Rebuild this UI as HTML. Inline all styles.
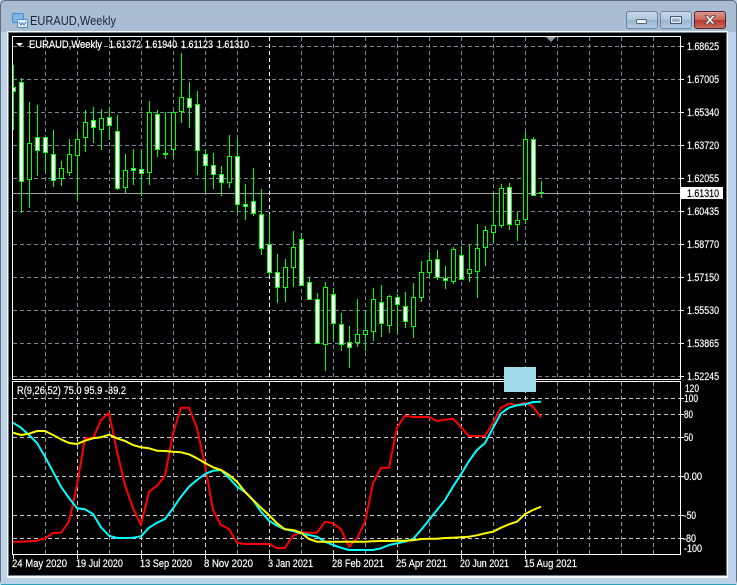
<!DOCTYPE html>
<html><head><meta charset="utf-8"><title>EURAUD,Weekly</title>
<style>
html,body{margin:0;padding:0;width:737px;height:585px;overflow:hidden;background:#bcd2e8}
svg{display:block;position:absolute;left:0;top:0}
text{font-family:"Liberation Sans",sans-serif;font-size:11px;fill:#fff;stroke:#fff;stroke-width:.2px}
</style></head><body>
<svg width="737" height="585" viewBox="0 0 737 585" xmlns="http://www.w3.org/2000/svg">
<defs>
<linearGradient id="tb" x1="0" y1="0" x2="0" y2="1"><stop offset="0" stop-color="#a8bdd1"/><stop offset="1" stop-color="#bed4ea"/></linearGradient>
<linearGradient id="bn" x1="0" y1="0" x2="0" y2="1"><stop offset="0" stop-color="#c6d7e8"/><stop offset=".48" stop-color="#b2c8de"/><stop offset=".52" stop-color="#98b3cf"/><stop offset="1" stop-color="#b6cfe8"/></linearGradient>
<linearGradient id="cl" x1="0" y1="0" x2="0" y2="1"><stop offset="0" stop-color="#dc9a90"/><stop offset=".48" stop-color="#cc6a5c"/><stop offset=".52" stop-color="#b8372a"/><stop offset="1" stop-color="#c8705e"/></linearGradient>
<clipPath id="cp"><rect x="13" y="37" width="667" height="342"/></clipPath>
</defs>
<!-- window frame -->
<rect x="0" y="0" width="737" height="585" rx="5" fill="#5f6f7c"/>
<rect x="1" y="1" width="735" height="583" rx="4" fill="url(#tb)"/>
<rect x="1" y="32" width="735" height="552" fill="#bcd2e8"/>
<rect x="1" y="584" width="735" height="1" fill="#2f9fb4"/>
<rect x="7" y="31" width="721" height="547" fill="#f4f7fb"/>
<rect x="8" y="32" width="719" height="544" fill="#6f7f8c"/>
<rect x="9" y="33" width="717" height="542" fill="#000"/>
<!-- title -->
<rect x="12.500" y="13.500" width="11" height="9" rx="1" fill="#7fb6ea" stroke="#4a8ac8"/>
<rect x="17.500" y="19.500" width="10" height="8" rx="1" fill="#e8f3fc" stroke="#4a8ac8"/>
<path d="M19 22l2 3 1.500-2 1.500 2 2-3" fill="none" stroke="#3a78b8"/>
<text x="30" y="25" style="font-size:12.500px;fill:#16283a;stroke:none" textLength="86" lengthAdjust="spacingAndGlyphs">EURAUD,Weekly</text>
<!-- buttons -->
<rect x="626.500" y="11.500" width="31" height="17" rx="2.500" fill="url(#bn)" stroke="#6b84a0"/>
<rect x="660.500" y="11.500" width="31" height="17" rx="2.500" fill="url(#bn)" stroke="#6b84a0"/>
<rect x="694.500" y="11.500" width="31" height="17" rx="2.500" fill="url(#cl)" stroke="#5a2236"/>
<rect x="636.500" y="19.500" width="10" height="4" rx="1" fill="#eef2f6" stroke="#55667a"/>
<rect x="670.500" y="16.500" width="11" height="7" fill="none" stroke="#46586c" stroke-width="1"/>
<rect x="671.500" y="17.500" width="9" height="5" fill="none" stroke="#eef2f6" stroke-width="1"/>
<rect x="673.500" y="19" width="4" height="2" fill="#8ea6be"/>
<path d="M705 15.500h3l2 2.500 2-2.500h3.500l-3.800 4.500 3.800 4h-3.500l-2-2.300-2 2.300h-3.500l3.800-4z" fill="#f0f0f0" stroke="#5c4048" stroke-width=".8"/>

<!-- upper grid -->
<g shape-rendering="crispEdges" fill="none">
<path stroke="#778899" stroke-dasharray="4 3" d="M13 46.500H680M13 79.500H680M13 112.500H680M13 145.500H680M13 178.500H680M13 211.500H680M13 244.500H680M13 277.500H680M13 310.500H680M13 343.500H680M13 376.500H680"/>
<path stroke="#778899" stroke-dasharray="4 3" d="M45.500 37V379M77.500 37V379M109.500 37V379M141.500 37V379M173.500 37V379M205.500 37V379M237.500 37V379M301.500 37V379M333.500 37V379M365.500 37V379M397.500 37V379M429.500 37V379M461.500 37V379M493.500 37V379M525.500 37V379M557.500 37V379M589.500 37V379M621.500 37V379M653.500 37V379"/>
<path stroke="#fff" stroke-dasharray="4 3" d="M269.500 37V379"/>
<!-- lower grid -->
<path stroke="#c4c8cc" stroke-dasharray="4 3" d="M13 398.500H680M13 414.500H680M13 437.500H680M13 476.500H680M13 515.500H680M13 538.500H680"/>
<path stroke="#8a98a8" stroke-dasharray="4 3" d="M45.500 382V554M109.500 382V554M173.500 382V554M237.500 382V554M301.500 382V554M365.500 382V554M429.500 382V554M493.500 382V554M557.500 382V554M589.500 382V554M621.500 382V554M653.500 382V554"/>
<path stroke="#d4d8dc" stroke-dasharray="4 3" d="M77.500 382V554M141.500 382V554M205.500 382V554M269.500 382V554M333.500 382V554M397.500 382V554M461.500 382V554M525.500 382V554"/>
<!-- price line -->
<path stroke="#a0a0a0" d="M13 193.500H680"/>
</g>

<!-- candles -->
<g clip-path="url(#cp)" shape-rendering="crispEdges">
<path fill="none" stroke="#00ff00" d="M13.500 65V130M21.500 78V213M29.500 102V208M37.500 105V176M45.500 137V172M53.500 130V187M61.500 161V186M69.500 139V176M77.500 132V200M85.500 110V152M93.500 107V143M101.500 109V150M109.500 107V140M117.500 115V190M125.500 154V193M133.500 149V185M141.500 150V196M149.500 101V185M157.500 110V157M165.500 112V159M173.500 111V158M181.500 53V123M189.500 82V128M197.500 91V175M205.500 149V193M213.500 153V189M221.500 166V196M229.500 135V188M237.500 138V213M245.500 184V220M253.500 168V216M261.500 189V255M269.500 214V276M277.500 254V303M285.500 259V302M293.500 231V287M301.500 233V285M309.500 277V299M317.500 293V344M325.500 282V371M333.500 288V340M341.500 313V351M349.500 326V368M357.500 299V347M365.500 310V351M373.500 288V341M381.500 285V337M389.500 295V333M397.500 294V333M405.500 292V328M413.500 283V338M421.500 261V302M429.500 252V278M437.500 250V280M445.500 266V289M453.500 247V284M461.500 246V280M469.500 244V282M477.500 224V298M485.500 226V266M493.500 194V243M501.500 184V228M509.500 183V230M517.500 212V241M525.500 132V224M533.500 137V195M541.500 181V198"/>
<!-- up candles (black body) -->
<path fill="#000" stroke="#00ff00" d="M27.500 143.500h4v36h-4zM59.500 168.500h4v10h-4zM67.500 154.500h4v18h-4zM75.500 139.500h4v16h-4zM83.500 122.500h4v15h-4zM99.500 118.500h4v11h-4zM123.500 170.500h4v17h-4zM147.500 112.500h4v60h-4zM171.500 112.500h4v37h-4zM179.500 97.500h4v14h-4zM227.500 156.500h4v26h-4zM283.500 267.500h4v20h-4zM291.500 247.500h4v20h-4zM323.500 287.500h4v57h-4zM355.500 334.500h4v8h-4zM363.500 330.500h4v4h-4zM371.500 299.500h4v32h-4zM387.500 296.500h4v29h-4zM411.500 297.500h4v29h-4zM419.500 272.500h4v25h-4zM427.500 260.500h4v12h-4zM451.500 249.500h4v32h-4zM467.500 269.500h4v4h-4zM475.500 248.500h4v23h-4zM483.500 230.500h4v17h-4zM491.500 225.500h4v7h-4zM499.500 188.500h4v37h-4zM515.500 220.500h4v4h-4zM523.500 139.500h4v80h-4z"/>
<!-- down candles (white body) -->
<path fill="#fff" stroke="#00ff00" d="M11.500 87.500h4v4h-4zM19.500 82.500h4v99h-4zM35.500 137.500h4v13h-4zM43.500 137.500h4v15h-4zM51.500 154.500h4v26h-4zM91.500 120.500h4v7h-4zM107.500 117.500h4v8h-4zM115.500 131.500h4v57h-4zM131.500 168.500h4v2h-4zM139.500 169.500h4v4h-4zM155.500 114.500h4v35h-4zM163.500 153.500h4v1h-4zM187.500 98.500h4v9h-4zM195.500 104.500h4v46h-4zM203.500 154.500h4v11h-4zM211.500 165.500h4v9h-4zM219.500 174.500h4v8h-4zM235.500 156.500h4v48h-4zM243.500 204.500h4v2h-4zM251.500 201.500h4v12h-4zM259.500 214.500h4v34h-4zM267.500 244.500h4v28h-4zM275.500 272.500h4v15h-4zM299.500 239.500h4v46h-4zM307.500 282.500h4v17h-4zM315.500 299.500h4v44h-4zM331.500 294.500h4v29h-4zM339.500 324.500h4v20h-4zM347.500 342.500h4v5h-4zM379.500 302.500h4v21h-4zM395.500 297.500h4v7h-4zM403.500 306.500h4v15h-4zM435.500 259.500h4v18h-4zM443.500 278.500h4v2h-4zM459.500 255.500h4v24h-4zM507.500 187.500h4v37h-4zM531.500 139.500h4v56h-4z"/>
<path stroke="#00ff00" d="M539 192.500h5"/>
</g>

<!-- chart frames -->
<g fill="none" stroke="#fff" shape-rendering="crispEdges">
<rect x="12.500" y="36.500" width="668" height="343"/>
<rect x="12.500" y="381.500" width="668" height="173"/>
<path d="M681 46.500h3M681 79.500h3M681 112.500h3M681 145.500h3M681 178.500h3M681 211.500h3M681 244.500h3M681 277.500h3M681 310.500h3M681 343.500h3M681 376.500h3M681 398.500h3M681 414.500h3M681 437.500h3M681 476.500h3M681 515.500h3M681 538.500h3"/>
<path d="M13.500 555v4M77.500 555v4M141.500 555v4M205.500 555v4M269.500 555v4M333.500 555v4M397.500 555v4M461.500 555v4M525.500 555v4"/>
</g>

<!-- indicator lines -->
<g fill="none" stroke-width="2" stroke-linejoin="round">
<polyline stroke="#ff0000" points="13,541.700 21,541.700 29,541.300 37,540.700 45,538.300 53,533 61,532.700 69,521.700 77,485 85,438.300 93,438.300 101,420 109,412.700 117,451.700 125,485 133,508.300 141,525 149,491.700 157,485.700 165,475.700 173,433.300 181,407.700 189,407.700 197,428.300 205,465 213,510 221,525 229,529 237,542.700 245,544 253,544 261,544 269,544 277,548 285,548 293,535.700 301,532.300 309,532.700 317,532.700 325,521.700 333,523.300 341,529.300 349,546.700 357,538.300 365,521.700 373,483.300 381,467.700 389,467.700 397,427.700 405,415.700 413,417 421,417 429,417 437,421 445,419.700 453,418.700 461,427.300 469,436 477,436 485,436 493,423 501,407.700 509,403.700 517,405 525,402.700 533,406.700 541,417.300"/>
<polyline stroke="#00ffff" points="13,422.700 21,427.700 29,435 37,443 45,456.700 53,471.700 61,486.700 69,498 77,508.300 85,509.300 93,514 101,527.300 109,535.700 117,538 125,538 133,537.700 141,536.300 149,527.700 157,522.700 165,519 173,508.300 181,496.700 189,486.700 197,480 205,474 213,470.700 221,470 229,478 237,486.700 245,492 253,500 261,511.700 269,520.700 277,525.700 285,529.300 293,531 301,533.300 309,535 317,536.700 325,541.700 333,545 341,547.700 349,550 357,550 365,550 373,550 381,548.300 389,545 397,543.300 405,541.700 413,539 421,530 429,520 437,510 445,500 453,486.700 461,474.300 469,461 477,450 485,443 493,428 501,413.300 509,407.700 517,405.300 525,404.300 533,402 541,401.700"/>
<polyline stroke="#ffff00" points="13,432.700 21,435 29,433.700 37,431 45,431 53,435 61,439.300 69,443 77,444 85,440.700 93,438.300 101,437.300 109,434.700 117,438.300 125,441 133,445 141,447.300 149,448.300 157,450.700 165,451 173,451.700 181,452.300 189,454.300 197,458.300 205,463 213,467.300 221,470 229,475 237,481.700 245,491.700 253,500 261,507.700 269,515 277,523.300 285,529.300 293,530 301,532.700 309,539 317,541.700 325,541.700 333,541.700 341,541.700 349,541.700 357,541.700 365,541.700 373,541.300 381,541 389,541 397,540.700 405,540.700 413,540.300 421,539 429,538.700 437,538.700 445,538 453,537.700 461,537.300 469,536.700 477,535.300 485,533.300 493,531.700 501,527.700 509,524.300 517,521.700 525,514 533,510 541,506.700"/>
</g>

<!-- light blue box -->
<rect x="504" y="367" width="32" height="25" fill="#9fd9ea"/>
<!-- shift marker -->
<path d="M546 37h10l-5 5z" fill="#8a949e"/>
<!-- header -->
<path d="M16 43h7l-3.500 3.500z" fill="#fff"/>
<text x="29" y="48" textLength="73" lengthAdjust="spacingAndGlyphs">EURAUD,Weekly</text>
<text x="109" y="48" textLength="32" lengthAdjust="spacingAndGlyphs">1.61372</text>
<text x="145" y="48" textLength="32" lengthAdjust="spacingAndGlyphs">1.61940</text>
<text x="181" y="48" textLength="32" lengthAdjust="spacingAndGlyphs">1.61123</text>
<text x="217" y="48" textLength="32" lengthAdjust="spacingAndGlyphs">1.61310</text>
<text x="17" y="394" textLength="109" lengthAdjust="spacingAndGlyphs">R(9,26,52) 75.0 95.9 -39.2</text>
<!-- price axis -->
<g>
<text x="687" y="50" textLength="32" lengthAdjust="spacingAndGlyphs">1.68625</text>
<text x="687" y="83" textLength="32" lengthAdjust="spacingAndGlyphs">1.67005</text>
<text x="687" y="116" textLength="32" lengthAdjust="spacingAndGlyphs">1.65340</text>
<text x="687" y="149" textLength="32" lengthAdjust="spacingAndGlyphs">1.63720</text>
<text x="687" y="182" textLength="32" lengthAdjust="spacingAndGlyphs">1.62055</text>
<text x="687" y="215" textLength="32" lengthAdjust="spacingAndGlyphs">1.60435</text>
<text x="687" y="248" textLength="32" lengthAdjust="spacingAndGlyphs">1.58770</text>
<text x="687" y="281" textLength="32" lengthAdjust="spacingAndGlyphs">1.57150</text>
<text x="687" y="314" textLength="32" lengthAdjust="spacingAndGlyphs">1.55530</text>
<text x="687" y="347" textLength="32" lengthAdjust="spacingAndGlyphs">1.53865</text>
<text x="687" y="380" textLength="32" lengthAdjust="spacingAndGlyphs">1.52245</text>
<rect x="681" y="187" width="42" height="12" fill="#fff"/>
<text x="687" y="197" style="fill:#000;stroke:#000" textLength="32" lengthAdjust="spacingAndGlyphs">1.61310</text>
<text x="685" y="392" textLength="14" lengthAdjust="spacingAndGlyphs">120</text>
<text x="684" y="402" textLength="14" lengthAdjust="spacingAndGlyphs">100</text>
<text x="684" y="418" textLength="9" lengthAdjust="spacingAndGlyphs">80</text>
<text x="684" y="441" textLength="9" lengthAdjust="spacingAndGlyphs">50</text>
<text x="684" y="480" textLength="18" lengthAdjust="spacingAndGlyphs">0.00</text>
<text x="684" y="519" textLength="12" lengthAdjust="spacingAndGlyphs">-50</text>
<text x="683" y="542" textLength="13" lengthAdjust="spacingAndGlyphs">-80</text>
<text x="684" y="552" textLength="18" lengthAdjust="spacingAndGlyphs">-100</text>
</g>
<!-- time axis -->
<g>
<text x="12" y="567" textLength="55" lengthAdjust="spacingAndGlyphs">24 May 2020</text>
<text x="76" y="567" textLength="47" lengthAdjust="spacingAndGlyphs">19 Jul 2020</text>
<text x="140" y="567" textLength="52" lengthAdjust="spacingAndGlyphs">13 Sep 2020</text>
<text x="204" y="567" textLength="49" lengthAdjust="spacingAndGlyphs">8 Nov 2020</text>
<text x="268" y="567" textLength="45" lengthAdjust="spacingAndGlyphs">3 Jan 2021</text>
<text x="332" y="567" textLength="52" lengthAdjust="spacingAndGlyphs">28 Feb 2021</text>
<text x="396" y="567" textLength="51" lengthAdjust="spacingAndGlyphs">25 Apr 2021</text>
<text x="460" y="567" textLength="49" lengthAdjust="spacingAndGlyphs">20 Jun 2021</text>
<text x="524" y="567" textLength="53" lengthAdjust="spacingAndGlyphs">15 Aug 2021</text>
</g>
</svg>
</body></html>
